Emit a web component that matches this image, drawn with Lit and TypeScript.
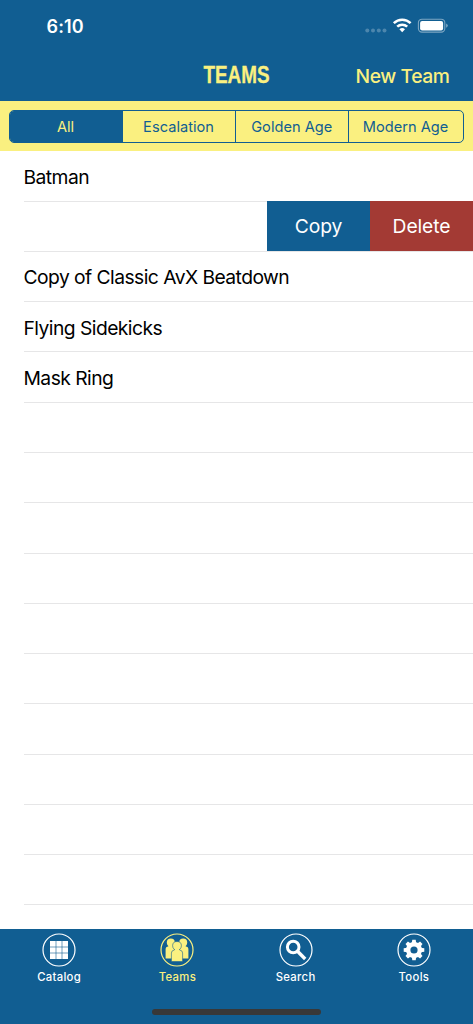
import { LitElement, html, svg, css } from "lit";
import { customElement, state } from "lit/decorators.js";

const ICONS: Record<string, unknown> = {
  Catalog: svg`
    <rect x="8" y="8" width="18" height="18" fill="currentColor"/>
    <path d="M14 8v18M20 8v18M8 14h18M8 20h18" stroke="#115e92" stroke-width=".6"/>`,
  Teams: svg`
    <g fill="currentColor">
      <circle cx="10.8" cy="9.6" r="4"/><circle cx="23.2" cy="9.6" r="4"/>
      <path d="M5.6 25.4V16.2q0-2.6 2.6-2.8l.4-1.6h5.4v13.6z"/>
      <path d="M28.4 25.4V16.2q0-2.6-2.6-2.8l-.4-1.6H20v13.6z"/>
      <path d="M11.4 28.6v-8.6q0-2.6 3-3v-.6q-1.8-1.2-1.8-3.6 0-4.3 4.4-4.3t4.4 4.3q0 2.4-1.8 3.6v.6q3 .4 3 3v8.6z" stroke="#115e92" stroke-width=".6"/>
    </g>`,
  Search: svg`
    <circle cx="14.2" cy="14" r="5.8" fill="none" stroke="currentColor" stroke-width="3"/>
    <path d="M18.5 18.3L26.2 26" fill="none" stroke="currentColor" stroke-width="3.4"/>`,
  Tools: svg`
    <circle cx="17" cy="17" r="5.8" fill="none" stroke="currentColor" stroke-width="4.4"/>
    <g fill="currentColor">
      ${[0, 45, 90, 135, 180, 225, 270, 315].map(
        (a) => svg`<path d="M14.7 10.5L15.3 6.7h3.4L19.3 10.5z" transform="rotate(${a} 17 17)"/>`
      )}
    </g>`,
};

@customElement("app-root")
export class AppRoot extends LitElement {
  static styles = css`
    :host {
      display: flex;
      flex-direction: column;
      height: 1024px;
      width: 473px;
      overflow: hidden;
      background: #fff;
      font-family: Inter, "Liberation Sans", sans-serif;
      color: #000;
    }
    * { box-sizing: border-box; }
    button {
      font: inherit;
      color: inherit;
      background: none;
      border: 0;
      padding: 0;
      margin: 0;
      letter-spacing: inherit;
    }
    .header { background: #115e92; height: 101px; flex: none; }
    .status {
      height: 50px;
      padding: 2px 25px 0 46.6px;
      display: flex;
      align-items: center;
      justify-content: space-between;
      color: #fff;
    }
    .time { font-size: 18px; font-weight: 600; letter-spacing: 0.1px; }
    .signals { display: block; width: 84px; height: 20px; }
    .nav {
      height: 51px;
      display: grid;
      grid-template-columns: 1fr auto 1fr;
      align-items: center;
      color: #faf080;
      padding: 0 23.5px;
    }
    .title {
      grid-column: 2;
      margin: 0;
      padding-bottom: 3px;
      width: 67px;
      display: flex;
      justify-content: center;
      font: bold 23.6px/48px "Liberation Sans", sans-serif;
      -webkit-text-stroke: 0.3px #faf080;
      transform: scaleX(0.8);
    }
    .new {
      justify-self: end;
      font-size: 19.3px;
      line-height: 51px;
      padding-top: 1px;
      font-weight: 500;
      letter-spacing: -0.42px;
      white-space: nowrap;
    }
    .filters {
      height: 50px;
      flex: none;
      background: #faf080;
      padding: 9px 9.3px 8px;
    }
    .segments {
      height: 33px;
      display: grid;
      grid-template-columns: 111.5px 113.5px 113px 1fr;
      border: 1px solid #115e92;
      border-radius: 5px;
      overflow: hidden;
      color: #115e92;
      font-size: 14.6px;
      letter-spacing: 0.03px;
    }
    .segment { padding-right: 1px; }
    .segment + .segment { border-left: 1px solid #115e92; }
    .segment.selected { background: #115e92; color: #faf080; }
    .list { flex: 1; min-height: 0; overflow: hidden; }
    .row {
      height: 50.27px;
      display: flex;
      margin-left: 23.5px;
      padding-top: 1.4px;
      border-bottom: 1px solid #e6e6e7;
      align-items: center;
      font-size: 19.3px;
      letter-spacing: -0.55px;
      white-space: nowrap;
    }
    .row:first-child { height: 50.7px; }
    .row.swiped {
      justify-content: flex-end;
      align-items: stretch;
      padding-top: 0;
      color: #fff;
      letter-spacing: -0.1px;
    }
    .action { width: 103px; margin-top: -1px; }
    .copy { background: #115e92; }
    .delete { background: #a33a34; }
    .tabs {
      height: 95px;
      flex: none;
      background: #115e92;
      display: flex;
      flex-direction: column;
      justify-content: space-between;
      align-items: center;
      padding-bottom: 9.5px;
    }
    .items { display: grid; grid-template-columns: repeat(4, 1fr); width: 100%; }
    .tab {
      display: flex;
      flex-direction: column;
      align-items: center;
      padding-top: 4px;
      color: #fff;
      font-size: 11.3px;
      font-weight: 500;
      line-height: 15px;
      letter-spacing: 0.32px;
    }
    .tab.active { color: #faf080; }
    .tab svg { width: 34px; height: 34px; margin-bottom: 3px; display: block; }
    .indicator { width: 169px; height: 6px; border-radius: 3px; background: #383838; }
  `;

  @state() private filter = "All";
  @state() private tab = "Teams";

  private rows = ["Batman", null, "Copy of Classic AvX Beatdown", "Flying Sidekicks", "Mask Ring", ...Array(10).fill("")];

  render() {
    return html`
      <header class="header">
        <div class="status">
          <span class="time">6:10</span>
          <svg class="signals" viewBox="0 0 84 20">
            <g fill="#fff" fill-opacity=".25">
              <circle cx="3.3" cy="14.5" r="2"/><circle cx="9" cy="14.5" r="2"/>
              <circle cx="14.8" cy="14.5" r="2"/><circle cx="20.5" cy="14.5" r="2"/>
            </g>
            <g fill="none" stroke="#fff" stroke-width="2.5">
              <path d="M29.8 7.2a12 12 0 0 1 16.8 0"/>
              <path d="M33.2 10.7a7.2 7.2 0 0 1 10 0"/>
            </g>
            <path d="M35.4 13.3a4 4 0 0 1 5.6 0l-2.8 2.9z" fill="#fff"/>
            <rect x="54.4" y="3.2" width="26.4" height="12.9" rx="3.6" fill="none" stroke="#fff" stroke-opacity=".45" stroke-width="1.1"/>
            <rect x="56.1" y="4.9" width="23" height="9.5" rx="2" fill="#fff"/>
            <path d="M82.1 7.4q1.7.7 1.7 2.2t-1.7 2.2z" fill="#fff" fill-opacity=".45"/>
          </svg>
        </div>
        <div class="nav">
          <h1 class="title">TEAMS</h1>
          <button class="new">New Team</button>
        </div>
      </header>
      <div class="filters">
        <div class="segments">
          ${["All", "Escalation", "Golden Age", "Modern Age"].map(
            (f) => html`<button class="segment ${f === this.filter ? "selected" : ""}" @click=${() => (this.filter = f)}>${f}</button>`
          )}
        </div>
      </div>
      <main class="list">
        ${this.rows.map((r) =>
          r === null
            ? html`<div class="row swiped">
                <button class="action copy">Copy</button><button class="action delete">Delete</button>
              </div>`
            : html`<div class="row">${r}</div>`
        )}
      </main>
      <nav class="tabs">
        <div class="items">
          ${Object.keys(ICONS).map(
            (name) => html`<button class="tab ${name === this.tab ? "active" : ""}" @click=${() => (this.tab = name)}>
              <svg viewBox="0 0 34 34">
                <circle cx="17" cy="17" r="16" fill="none" stroke="currentColor" stroke-width="1.2"/>
                ${ICONS[name]}
              </svg>
              ${name}
            </button>`
          )}
        </div>
        <div class="indicator"></div>
      </nav>
    `;
  }
}
